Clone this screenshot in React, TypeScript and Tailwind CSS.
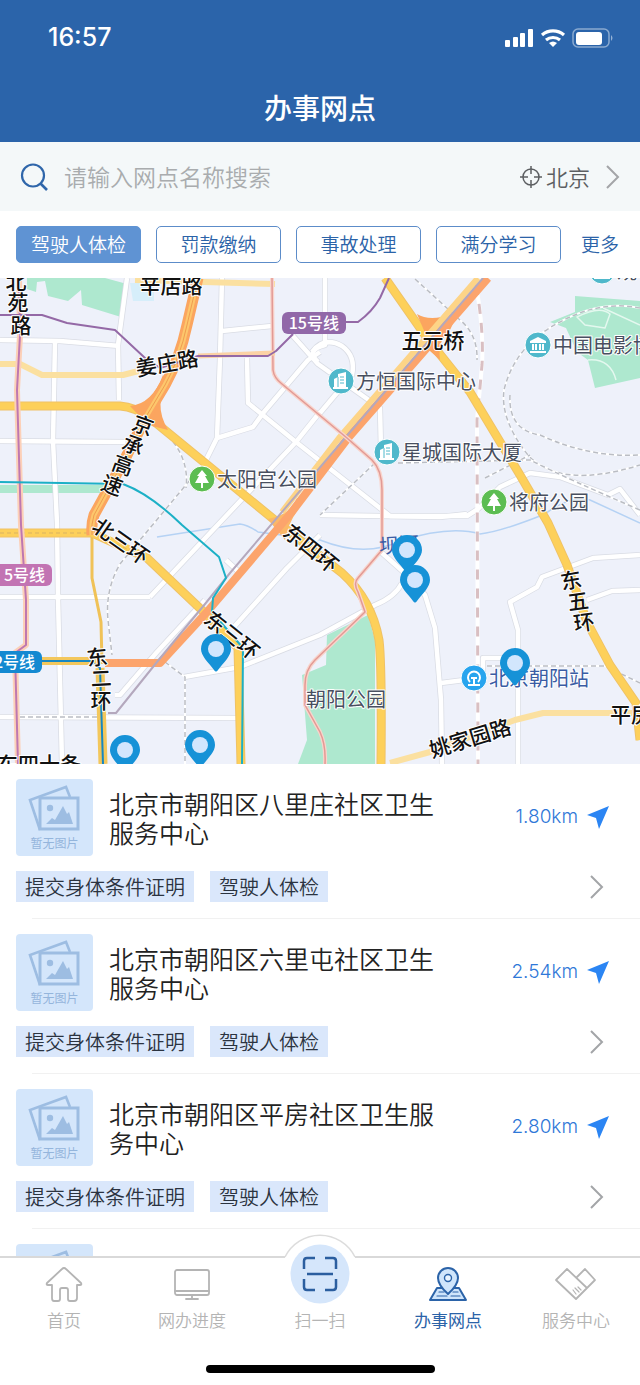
import { ReactNode, useState } from 'react';

interface Branch {
  name: string;
  distance: string;
  tags: string[];
}

const categories = ['驾驶人体检', '罚款缴纳', '事故处理', '满分学习'];

const branches: Branch[] = [
  { name: '北京市朝阳区八里庄社区卫生服务中心', distance: '1.80km', tags: ['提交身体条件证明', '驾驶人体检'] },
  { name: '北京市朝阳区六里屯社区卫生服务中心', distance: '2.54km', tags: ['提交身体条件证明', '驾驶人体检'] },
  { name: '北京市朝阳区平房社区卫生服务中心', distance: '2.80km', tags: ['提交身体条件证明', '驾驶人体检'] },
];

// Map canvas
const MAP = { x: 0, y: 278, w: 640, h: 486 };

const pins = [
  { x: 407, y: 550 },
  { x: 415, y: 580 },
  { x: 216, y: 649 },
  { x: 515, y: 663 },
  { x: 125, y: 750 },
  { x: 200, y: 745 },
];

const parks = [
  'M27 278H105L127 284L121 317L82 305L81 290L68 301L48 296L45 281L37 282L36 292L27 289Z',
  'M327 635L368 615L375 640V764H298L307 740L302 675L326 665Z',
  'M575 296L640 301V378L595 388L588 360L577 352L566 328L550 322L575 312Z',
  'M0 485H105V493H0Z',
];

const streets = [
  'M0 340L60 341L120 346',
  'M55 342L53 441L57 523L58 598L62 764',
  'M127 278L118 345L119 400',
  'M0 441L125 442',
  'M222 278L220 358L217 438L205 462',
  'M222 331L272 326',
  'M247 358L248 403L296 442L390 516L467 516L478 509L500 487L530 473L560 477L608 495L620 489L640 515',
  'M217 438L253 427L264 412L308 360L320 352',
  'M150 597L227 515L296 442L320 412',
  'M293 336L318 364L380 408L381 450',
  'M325 278V345Q305 350 318 362',
  'M312 352Q324 336 342 346Q356 356 352 375L320 413',
  'M0 597H150',
  'M226 560L240 573',
  'M233 628L287 568L320 535',
  'M184 677L240 667L320 635L375 605Q395 597 402 583',
  'M0 717L238 718',
  'M115 695H120L157 652L205 600',
  'M320 515L440 517L467 514',
  'M382 553L408 576L425 595L435 628L441 700L442 764',
  'M441 683L480 678',
  'M483 672V658H505',
  'M640 555L593 558L542 577L537 587L510 602L518 630V764',
  'M640 590L612 591L587 600',
];

const railways = [
  'M205 462L120 564Q105 590 108 620L112 655',
  'M165 662L185 677V764',
  'M162 430Q190 455 186 488',
  'M375 463L320 515',
  'M415 279L460 320Q478 335 477 360',
  'M640 308Q600 300 560 322Q515 345 504 390Q500 420 528 455Q560 490 640 465',
  'M510 395Q508 430 540 435Q590 458 640 455',
  'M398 463L530 460Q570 480 640 510',
  'M485 478L530 455',
  'M487 666H605L640 683',
  'M20 717H98',
];

const lightYellow = ['M0 364H20L42 375H123L150 368', 'M135 280L275 284', 'M390 763L430 752L515 720L543 713H640'];

const ringRoads = [
  'M0 406H120Q135 407 150 418L282 526L342 573Q372 600 379 640Q382 665 381 764',
  'M385 278L427 338L470 392L520 475L548 523L567 565L587 622L610 665L636 703L640 740',
  'M0 533H92L147 558L207 615L238 648L241 764',
];

const expressway = 'M198 278L187 325Q180 358 165 385L147 415L127 455L94 515Q91 524 92 535';
const metro13 = 'M272 278L273 370Q274 378 282 384L347 438L372 460Q382 470 382 490V550L358 578Q353 583 358 592L365 612L315 660Q305 670 305 685V705L320 732Q326 745 325 764';
const metro5 = 'M19 278L20 335L17 390L21 525L26 600V645L15 653L18 764';

interface Sign {
  text: string;
  x: number;
  y: number;
  rotate?: number;
}

const roadSigns: Sign[] = [
  { text: '辛店路', x: 171, y: 285 },
  { text: '北', x: 16, y: 281 },
  { text: '苑', x: 18, y: 302 },
  { text: '路', x: 21, y: 325 },
  { text: '姜庄路', x: 167, y: 363, rotate: -10 },
  { text: '京', x: 143, y: 425, rotate: 20 },
  { text: '承', x: 133, y: 445, rotate: 20 },
  { text: '高', x: 123, y: 465, rotate: 20 },
  { text: '速', x: 112, y: 485, rotate: 20 },
  { text: '北三环', x: 121, y: 541, rotate: 35 },
  { text: '东四环', x: 311, y: 548, rotate: 39 },
  { text: '东三环', x: 232, y: 635, rotate: 39 },
  { text: '东', x: 97, y: 657, rotate: -6 },
  { text: '二', x: 101, y: 678, rotate: -3 },
  { text: '环', x: 101, y: 700 },
  { text: '东', x: 571, y: 580, rotate: -10 },
  { text: '五', x: 578, y: 601, rotate: -8 },
  { text: '环', x: 584, y: 622, rotate: -8 },
  { text: '五元桥', x: 433, y: 340 },
  { text: '平房', x: 631, y: 714 },
  { text: '姚家园路', x: 470, y: 738, rotate: -17 },
  { text: '东四十条', x: 39, y: 764 },
];

const metroSigns = [
  { text: '15号线', x: 282, y: 312, w: 64, fill: '#9168a8' },
  { text: '5号线', x: -6, y: 564, w: 58, fill: '#c274b3' },
  { text: '2号线', x: -16, y: 651, w: 58, fill: '#1489d1' },
];

const places = [
  { text: '方恒国际中心', x: 341, y: 381, kind: 'tower' },
  { text: '星城国际大厦', x: 387, y: 452, kind: 'tower' },
  { text: '太阳宫公园', x: 202, y: 479, kind: 'park' },
  { text: '将府公园', x: 494, y: 502, kind: 'park' },
  { text: '中国电影博', x: 538, y: 345, kind: 'museum' },
  { text: '观', x: 602, y: 271, kind: 'museum' },
  { text: '北京朝阳站', x: 474, y: 678, kind: 'station' },
];

function PlaceIcon({ kind }: { kind: string }) {
  if (kind === 'park') {
    return (
      <>
        <circle r="13" fill="#5cbd52" stroke="#fff" />
        <path d="M0-9L5-3H3L7 4H1V9H-1V4H-7L-3-3H-5Z" fill="#fff" />
      </>
    );
  }
  if (kind === 'station') {
    return (
      <>
        <circle r="13" fill="#27a4ee" stroke="#fff" />
        <path d="M-4 4A6 6 0 1 1 4 4M-6 7H6M0 0V7M-3 0H3" fill="none" stroke="#fff" strokeWidth="2" />
      </>
    );
  }
  return (
    <>
      <circle r="13" fill="#4fb8cb" stroke="#fff" />
      {kind === 'museum' ? (
        <path d="M0-8L8-4V-2H-8V-4ZM-6-1H-4V5H-6ZM-3-1H-1V5H-3ZM1-1H3V5H1ZM4-1H6V5H4ZM-8 6H8V8H-8Z" fill="#fff" />
      ) : (
        <>
          <path d="M-7 6V-2L-3-4V-7L5-9V6H7V8H-8V6Z" fill="#fff" />
          <path d="M-1-4H3M-1-1H3M-1 2H3M-3-4V6" stroke="#4fb8cb" />
        </>
      )}
    </>
  );
}

function CityMap() {
  return (
    <div className="relative shrink-0 overflow-hidden bg-[#eef1fa]">
      <svg
        viewBox={`${MAP.x} ${MAP.y} ${MAP.w} ${MAP.h}`}
        className="block h-auto w-full font-['Noto_Sans_CJK_SC',sans-serif]"
        fill="none"
        strokeLinejoin="round"
      >
        {parks.map(d => <path key={d} d={d} fill="#aee8cf" />)}
        <path d="M130 283H154V301H133Z" fill="#d6eefa" />
        <path d="M577 317Q600 305 610 314L605 328L585 325ZM588 360Q610 358 616 380M603 308L640 325" stroke="#e4f8ef" strokeWidth="1.5" />

        {/* Rivers */}
        <path d="M157 537L240 524Q248 525 258 532L320 540Q365 558 400 541Q450 525 480 534Q500 532 545 514Q570 495 590 500L640 523" stroke="#b5d2f4" strokeWidth="1.5" />

        {/* Streets */}
        {streets.map(d => <path key={d} d={d} stroke="#d9dce4" strokeWidth="6" />)}
        {streets.map(d => <path key={d} d={d} stroke="#fff" strokeWidth="4.5" />)}
        {railways.map(d => (
          <g key={d}>
            <path d={d} stroke="#fff" strokeWidth="2" />
            <path d={d} stroke="#babdc4" strokeWidth="1.5" strokeDasharray="5 3" />
          </g>
        ))}
        <path d="M476 285Q484 330 482 365L477 420L478 764" stroke="#fff" strokeWidth="4" />
        <path d="M476 285Q484 330 482 365L477 420L478 764" stroke="#d9bfc2" strokeWidth="3" strokeDasharray="10 9" />

        {/* Arterial roads */}
        {lightYellow.map(d => <path key={d} d={d} stroke="#fbe0a0" strokeWidth="6" />)}
        <path d="M92 533V578L101 622L102 664" stroke="#f0c257" strokeWidth="3" />
        <path d="M100 668L103 764" stroke="#f3c75c" strokeWidth="9" />
        <path d="M40 661H100" stroke="#f3c75c" strokeWidth="8" />
        {ringRoads.map(d => <path key={d} d={d} stroke="#efc266" strokeWidth="9" />)}
        {ringRoads.map(d => <path key={d} d={d} stroke="#fdd05a" strokeWidth="7" />)}
        <path d="M0 533H92L147 558" stroke="#d9b362" strokeDasharray="4 3" />

        {/* Expressways */}
        <path d="M130 406Q152 404 163 375L170 382Q152 402 168 430L148 425Z" fill="#fba55f" />
        <path d="M268 519Q290 515 297 498L304 500Q287 524 285 540L275 528Z" fill="#fbb868" />
        <path d="M417 314Q430 322 452 314L465 298L450 330Q437 341 440 360L430 351Q425 348 411 360L428 340Z" fill="#fba55f" />
        <path d={expressway} stroke="#fba55f" strokeWidth="11" />
        <path d={expressway} stroke="#fdc76c" strokeWidth="5" />
        <path d={expressway} stroke="#ef9c50" />
        <path d="M105 663H160L207 612L291 513L348 438L488 278" stroke="#fca46c" strokeWidth="8" />
        <path d="M282 512L339 438L478 278" stroke="#fdd487" strokeWidth="6" />
        <path d="M108 713H116L157 662L205 604L230 573L345 438L483 278" stroke="#b4a8bd" strokeWidth="2" />

        {/* Metro lines */}
        <path d={metro5} stroke="#fcd0b8" strokeWidth="6" />
        <path d={metro5} stroke="#be77b0" strokeWidth="2" />
        <path d={metro13} stroke="#f9d4cb" strokeWidth="4" />
        <path d={metro13} stroke="#e29a95" strokeWidth="1.5" />
        <path d="M198 356L275 353" stroke="#fbd2a5" strokeWidth="5" />
        <path d="M0 315H42L67 323L115 330L145 358L160 368L198 356H268L276 351L293 334M345 322H358Q372 312 380 298L389 278" stroke="#9469a6" strokeWidth="2" />
        <path d="M0 482L123 484Q150 494 182 525L219 557L226 578L213 598L212 612L243 648L242 764" stroke="#1cb0c6" strokeWidth="2" />
        <path d="M40 661H90L100 668L103 764" stroke="#1687c3" strokeWidth="2" />

        {metroSigns.map(m => (
          <g key={m.text}>
            <rect x={m.x} y={m.y} width={m.w} height="22" rx="6" fill={m.fill} />
            <text x={m.x + m.w - 7} y={m.y + 17} textAnchor="end" fill="#fff" className="text-[16px] font-medium">
              {m.text}
            </text>
          </g>
        ))}

        {roadSigns.map(s => (
          <text
            key={`${s.text}-${s.x}`}
            textAnchor="middle"
            transform={`translate(${s.x} ${s.y}) rotate(${s.rotate ?? 0})`}
            y="8"
            fill="#111"
            stroke="#fff"
            strokeWidth="2"
            className="text-[21px] font-medium [paint-order:stroke]"
          >
            {s.text}
          </text>
        ))}

        {places.map(p => (
          <g key={p.text} transform={`translate(${p.x} ${p.y})`}>
            <PlaceIcon kind={p.kind} />
            <text
              x="15"
              y="8"
              fill={p.kind === 'station' ? '#3a5ca4' : '#484f60'}
              stroke="#fff"
              strokeWidth="2"
              className="text-[20px] [paint-order:stroke]"
            >
              {p.text}
            </text>
          </g>
        ))}
        <text x="306" y="707" fill="#484f60" stroke="#fff" strokeWidth="2" className="text-[20px] [paint-order:stroke]">朝阳公园</text>
        <text x="379" y="552" fill="#3a5ca4" transform="rotate(-4 400 545)" className="text-[20px]">坝河</text>
      </svg>

      {pins.map((pin, i) => (
        <button
          key={i}
          type="button"
          aria-label={`网点 ${i + 1}`}
          className="absolute -mt-4 -ml-4 h-10 w-8"
          style={{ left: `${((pin.x - MAP.x) / MAP.w) * 100}%`, top: `${((pin.y - MAP.y) / MAP.h) * 100}%` }}
        >
          <svg viewBox="0 0 32 40" className="block h-10 w-8">
            <path d="M16 1A15 15 0 0 1 31 16C31 23 24 29 18 37Q16 40 14 37C8 29 1 23 1 16A15 15 0 0 1 16 1Z" fill="#1692d7" />
            <circle cx="16" cy="16" r="8" fill="#d2e6fd" />
          </svg>
        </button>
      ))}
    </div>
  );
}

function StatusBar() {
  return (
    <div className="flex h-19 items-center justify-between pr-[26px] pl-12 text-white">
      <span className="font-['Inter',sans-serif] text-[25px] font-medium">16:57</span>
      <svg viewBox="0 0 110 20" className="h-5 w-[110px]" fill="none">
        <rect x="1" y="12" width="5" height="7" rx="1" fill="#fff" />
        <rect x="9" y="9" width="5" height="10" rx="1" fill="#fff" />
        <rect x="16" y="5" width="5" height="14" rx="1" fill="#fff" />
        <rect x="24" y="1" width="5" height="18" rx="1" fill="#fff" />
        <path d="M38 7A17 17 0 0 1 60 7M42 12A11 11 0 0 1 56 12" stroke="#fff" strokeWidth="3.2" />
        <path d="M45 15Q49 12 53 15L49 19Z" fill="#fff" />
        <rect x="69" y="1" width="36" height="18" rx="5" stroke="#fff" strokeOpacity="0.45" strokeWidth="1.5" />
        <rect x="72" y="4" width="26" height="13" rx="3" fill="#fff" />
        <path d="M107 7Q110 10 107 13Z" fill="#fff" fillOpacity="0.5" />
      </svg>
    </div>
  );
}

function Chevron() {
  return (
    <svg viewBox="0 0 14 24" className="h-6 w-3.5 shrink-0" fill="none" stroke="#a3a5a8" strokeWidth="2">
      <path d="M1 1L12 12L1 23" />
    </svg>
  );
}

function SearchBar() {
  return (
    <div className="flex h-[69px] shrink-0 items-center bg-[#f4f8f9] px-5">
      <svg viewBox="0 0 28 28" className="h-7 w-7 shrink-0" fill="none" stroke="#2f66aa" strokeWidth="2.2">
        <circle cx="13" cy="12.5" r="11" />
        <path d="M20.5 20.5L27 27" strokeWidth="2.6" />
      </svg>
      <input
        type="search"
        aria-label="请输入网点名称搜索"
        placeholder="请输入网点名称搜索"
        className="ml-4 min-w-0 flex-1 bg-transparent text-[23px] font-[350] outline-none placeholder:text-[#a9acae]"
      />
      <button type="button" className="flex items-center text-[22px] font-[350] text-[#5c5f62]">
        <svg viewBox="0 0 22 22" className="mr-1 h-[22px] w-[22px]" fill="none" stroke="#5c5f62" strokeWidth="1.5">
          <circle cx="11" cy="11" r="8" />
          <path d="M11 0V8M11 14V22M0 11H8M14 11H22" />
        </svg>
        <span className="mr-4">北京</span>
        <Chevron />
      </button>
    </div>
  );
}

function Thumbnail({ label }: { label?: string }) {
  return (
    <div className="flex h-[77px] w-[77px] shrink-0 flex-col items-center rounded bg-[#d4e6fb] pt-[5px]">
      <svg viewBox="0 0 54 47" className="h-[47px] w-[54px]" fill="none" stroke="#9dbde2" strokeWidth="2.6">
        <path d="M12 46L2 16L38 3L42 13" />
        <rect x="12" y="14" width="38" height="31" strokeWidth="3" />
        <circle cx="22" cy="24" r="3.2" fill="#9dbde2" stroke="none" />
        <path d="M18 40L24 34L27 36L35 22L39 30L41 28L45 40Z" fill="#9dbde2" stroke="none" />
      </svg>
      {label && <span className="text-[12px] leading-6 text-[#94b5dc]">{label}</span>}
    </div>
  );
}

function BranchItem({ branch }: { branch: Branch }) {
  return (
    <li>
      <div className="px-4 pt-[15px] pb-4">
        <div className="flex items-center">
          <Thumbnail label="暂无图片" />
          <h2 className="ml-4 flex-1 text-[25px] leading-[29px] font-[350] text-[#222]">{branch.name}</h2>
          <a href="#navigate" className="flex w-44 items-center justify-end pr-[14px] font-['Inter',sans-serif] text-[19px] font-light text-[#2f78d8]">
            {branch.distance}
            <svg viewBox="0 0 24 24" className="ml-2 h-6 w-6" fill="#2b85f3">
              <path d="M23 0L13 23L10 12L1 9Z" />
            </svg>
          </a>
        </div>
        <div className="mt-[15px] flex items-center gap-4 pr-5">
          {branch.tags.map(tag => (
            <span key={tag} className="bg-[#dae7fb] px-[9px] text-[20px] leading-[31px] font-[350] text-[#2b3340]">
              {tag}
            </span>
          ))}
          <button type="button" aria-label="查看详情" className="ml-auto">
            <Chevron />
          </button>
        </div>
      </div>
      <div className="ml-8 h-px bg-[#f1f1f1]" />
    </li>
  );
}

function NavItem({ label, active, children }: { label: string; active?: boolean; children: ReactNode }) {
  return (
    <a
      href="#tab"
      aria-current={active ? 'page' : undefined}
      className={`flex flex-1 flex-col items-center text-[17px] leading-6 ${active ? 'text-[#2b63a8]' : 'font-[350] text-[#b4b4b4]'}`}
    >
      <svg viewBox="0 0 42 36" className="h-9 w-[42px]" fill="none" stroke="currentColor" strokeWidth="1.8" strokeLinejoin="round" strokeLinecap="round">
        {children}
      </svg>
      <span className="mt-[6px]">{label}</span>
    </a>
  );
}

function TabBar() {
  return (
    <nav className="relative shrink-0 border-t-2 border-[#d9d9d9] bg-white pt-2 pb-3">
      {/* Raised middle button */}
      <svg viewBox="0 0 74 74" className="absolute -top-6 left-1/2 -ml-[37px] h-[74px] w-[74px]">
        <path d="M2 23A39 39 0 0 1 72 23V50H2Z" fill="#fff" />
        <path d="M2 23A39 39 0 0 1 72 23" fill="none" stroke="#dcdcdc" strokeWidth="1.5" />
        <circle cx="37" cy="40" r="29.5" fill="#d5e6fb" />
        <path d="M32 24H24Q21 24 21 27V35M42 24H50Q53 24 53 27V35M21 45V53Q21 56 24 56H32M53 45V53Q53 56 50 56H42M24 40H50" fill="none" stroke="#2b5e9f" strokeWidth="2.5" />
      </svg>
      <div className="flex">
        <NavItem label="首页">
          <path d="M21 2Q22 2 23 3L38 17Q39 19 37 19H34V32Q34 35 31 35H27Q25 35 25 33V24Q25 22 23 22H19Q17 22 17 24V33Q17 35 15 35H11Q9 35 9 32V19H5Q3 19 4 17L19 3Q20 2 21 2Z" />
        </NavItem>
        <NavItem label="网办进度">
          <rect x="4" y="4" width="34" height="25" rx="2" />
          <path d="M4 25H38M21 29V33M15 33H27" />
        </NavItem>
        <NavItem label="扫一扫">{null}</NavItem>
        <NavItem label="办事网点" active>
          <path d="M10 22H32L39 34H3Z" fill="#cfe5fb" strokeWidth="2" />
          <path d="M12 26H17M26 26H31M10 30H20M24 30H33" strokeWidth="1.2" />
          <path d="M21 28Q11 19 11 12A10 10 0 0 1 31 12Q31 19 21 28Z" fill="#cfe5fb" strokeWidth="2" />
          <circle cx="21" cy="12" r="3.5" fill="#e9f4ff" strokeWidth="1.4" />
        </NavItem>
        <NavItem label="服务中心">
          <path d="M1 14L12 3L32 22L21 33ZM22 11L30 3L40 14L32 22" />
          <path d="M18 24L21 28M20 22L24 26M23 21L26 24" strokeWidth="1.2" />
        </NavItem>
      </div>
      <div className="mx-auto mt-[33px] h-2 w-[229px] rounded-full bg-black" />
    </nav>
  );
}

export default function App() {
  const [category, setCategory] = useState(categories[0]);

  return (
    <div className="flex h-screen flex-col overflow-hidden bg-white font-['Noto_Sans_CJK_SC',sans-serif]">
      <header className="shrink-0 bg-[#2b64aa] pb-2">
        <StatusBar />
        <h1 className="pt-2 pb-1 text-center text-[28px] leading-[46px] font-medium text-white">办事网点</h1>
      </header>

      <SearchBar />

      <div className="flex shrink-0 gap-[15px] px-4 py-[15px] text-[19px] font-[350]">
        {categories.map(item => (
          <button
            key={item}
            type="button"
            onClick={() => setCategory(item)}
            className={`h-[37px] flex-1 rounded-[5px] border whitespace-nowrap ${
              item === category ? 'border-[#5f93d3] bg-[#5f93d3] text-white' : 'border-[#5c8cc9] bg-white text-[#2b63a8]'
            }`}
          >
            {item}
          </button>
        ))}
        <button type="button" className="w-12 shrink-0 whitespace-nowrap text-[#2b63a8]">更多</button>
      </div>

      <CityMap />

      <ul className="min-h-0 flex-1 overflow-y-auto [scrollbar-width:none]">
        {branches.map(branch => (
          <BranchItem key={branch.name} branch={branch} />
        ))}
        {/* Next page, still loading */}
        <li className="px-4 pt-[15px]">
          <Thumbnail />
        </li>
      </ul>

      <TabBar />
    </div>
  );
}
